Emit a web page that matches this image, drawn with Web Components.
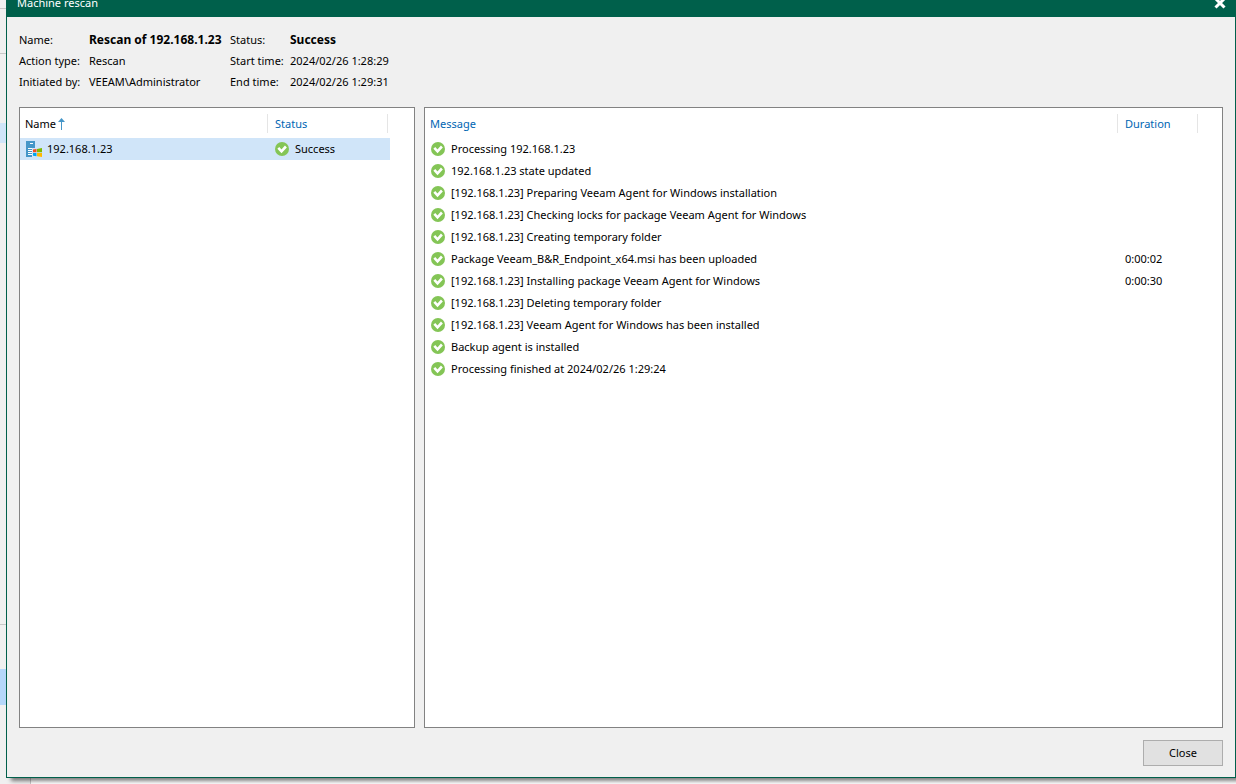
<!DOCTYPE html>
<html lang="en">
<head>
<meta charset="utf-8">
<meta name="viewport" content="width=device-width, initial-scale=1">
<title>Machine rescan</title>
<style>
    html, body {
        height: 100%;
        margin: 0;
        overflow: hidden;
    }
    body {
        display: grid;
        font: 11px/20px "Noto Sans", "Open Sans", sans-serif;
        color: #000;
    }
    body > * {
        grid-area: 1 / 1;
    }
</style>
</head>
<body>
<app-backdrop></app-backdrop>

<session-dialog>
    <span slot="title">Machine rescan</span>
    <session-info slot="info"></session-info>
    <machine-list slot="list"></machine-list>
    <message-list slot="list"></message-list>
</session-dialog>

<script>
/* main window left behind the dialog */
class AppBackdrop extends HTMLElement
{
    constructor()
    {
        super();
        this.attachShadow({ mode: 'open' });
        this.shadowRoot.innerHTML = `
            <style>
                :host {
                    display: grid;
                    grid-template-columns: 31px 1fr;
                    background: #fff;
                }
                .nav {
                    display: grid;
                    grid-template-rows: 9px 45px 69px 20px 1fr 44px 36px 79px;
                    background: #f0f0f0;
                    border-right: 1px solid #c8c8c8;
                }
                .line { border-bottom: 1px solid #c8c8c8; }
                .hover { background: #d0e5f9; }
                .selected { background: #b5d7fa; }
            </style>
            <div class="nav">
                <div class="line"></div>
                <div class="line"></div>
                <div></div>
                <div class="hover"></div>
                <div class="line"></div>
                <div></div>
                <div class="selected"></div>
                <div></div>
            </div>
        `;
    }
}

class SessionDialog extends HTMLElement
{
    constructor()
    {
        super();
        this.attachShadow({ mode: 'open' });
        this.shadowRoot.addEventListener('click', this.#onClick.bind(this));
        this.#render();
    }

    #onClick(e)
    {
        if (e.target.closest('.command-close')) this.remove();
    }

    #render()
    {
        this.shadowRoot.innerHTML = `
            <style>
                :host {
                    display: flex;
                    flex-direction: column;
                    box-sizing: border-box;
                    margin: -12px 0 6px 6px;
                    background: #f0f0f0;
                    border: 1px solid #00604b;
                    box-shadow: 5px 3px 4px rgba(0, 0, 0, 0.5);
                }
                header {
                    display: flex;
                    justify-content: space-between;
                    align-items: center;
                    height: 28px;
                    padding: 0 8px 0 10px;
                    background: #00604b;
                    color: #fff;
                }
                header button {
                    display: flex;
                    padding: 0;
                    border: 0;
                    background: none;
                }
                main {
                    flex: 1;
                    display: flex;
                    flex-direction: column;
                    gap: 15px;
                    padding: 12px;
                }
                .lists {
                    flex: 1;
                    display: grid;
                    grid-template-columns: 396px minmax(0, 1fr);
                    gap: 9px;
                }
                footer {
                    display: flex;
                    justify-content: flex-end;
                    padding: 0 12px 11px;
                }
                footer button {
                    width: 80px;
                    height: 26px;
                    padding: 0;
                    font: inherit;
                    color: inherit;
                    background: #e1e1e1;
                    border: 1px solid #adadad;
                }
                footer button:hover {
                    background: #e5f1fb;
                    border-color: #0078d7;
                }
            </style>
            <header>
                <slot name="title"></slot>
                <button type="button" class="command-close" aria-label="Close window">
                    <svg width="14" height="14" viewBox="0 0 14 14"><path d="M2.500 2.500l9 9M11.500 2.500l-9 9" stroke="#fff" stroke-width="3"/></svg>
                </button>
            </header>
            <main>
                <slot name="info"></slot>
                <div class="lists"><slot name="list"></slot></div>
            </main>
            <footer><button type="button" class="command-close">Close</button></footer>
        `;
    }
}

class SessionInfo extends HTMLElement
{
    constructor()
    {
        super();
        this.attachShadow({ mode: 'open' });
        this.shadowRoot.innerHTML = `
            <style>
                :host { display: block; }
                dl {
                    display: grid;
                    grid-template-columns: 70px 141px 60px 1fr;
                    line-height: 21px;
                    margin: 0;
                    white-space: nowrap;
                }
                dd { margin: 0; }
                .strong {
                    font-size: 12px;
                    font-weight: bold;
                }
            </style>
            <dl>
                <dt>Name:</dt><dd class="strong">Rescan of 192.168.1.23</dd>
                <dt>Status:</dt><dd class="strong">Success</dd>
                <dt>Action type:</dt><dd>Rescan</dd>
                <dt>Start time:</dt><dd>2024/02/26 1:28:29</dd>
                <dt>Initiated by:</dt><dd>VEEAM\\Administrator</dd>
                <dt>End time:</dt><dd>2024/02/26 1:29:31</dd>
            </dl>
        `;
    }
}

class IconSuccess extends HTMLElement
{
    constructor()
    {
        super();
        this.attachShadow({ mode: 'open' });
        this.shadowRoot.innerHTML = `
            <style>
                :host { display: block; flex: none; width: 14px; height: 14px; }
                svg { display: block; }
            </style>
            <svg width="14" height="14" viewBox="0 0 14 14">
                <circle cx="7" cy="7" r="7" fill="#84c556"/>
                <path d="M3.300 5.900l3.200 3.400 4.400-4.800" fill="none" stroke="#fff" stroke-width="2.600"/>
            </svg>
        `;
    }
}

class IconServer extends HTMLElement
{
    constructor()
    {
        super();
        this.attachShadow({ mode: 'open' });
        this.shadowRoot.innerHTML = `
            <style>
                :host { display: block; flex: none; width: 16px; height: 16px; }
                svg { display: block; }
            </style>
            <svg width="16" height="16" viewBox="0 0 16 16">
                <path d="M0 0h9v7H6v9H0z" fill="#4596c8"/>
                <path d="M4 2h3v1H4zM2 7h4v1H2zM2 9h4v1H2zM2 11h4v1H2zM2 13h4v1H2z" fill="#fff"/>
                <path d="M7 8.500l3.500-.5v3.200H7z" fill="#f04e23"/>
                <path d="M11 8l5-1v4.200h-5z" fill="#7fba00"/>
                <path d="M7 12h3.500v3.200L7 14.700z" fill="#00a4ef"/>
                <path d="M11 12h5v4l-5-.8z" fill="#ffb900"/>
            </svg>
        `;
    }
}

/* common look of both lists */
class BaseList extends HTMLElement
{
    constructor()
    {
        super();
        this.attachShadow({ mode: 'open' });
        this.shadowRoot.innerHTML = `
            <style>
                :host {
                    display: block;
                    background: #fff;
                    border: 1px solid #828282;
                    overflow: hidden;
                }
                table {
                    table-layout: fixed;
                    border-collapse: collapse;
                    white-space: nowrap;
                }
                th, td {
                    padding: 0 0 0 6px;
                    text-align: left;
                    font-weight: normal;
                }
                th {
                    height: 30px;
                    padding: 1px 0 0 5px;
                    box-sizing: border-box;
                    color: #0066b3;
                    background: linear-gradient(#e5e5e5, #e5e5e5) right 6px / 1px 19px no-repeat;
                }
                th.plain { background: none; }
                th.sorted { color: #000; }
                th svg { margin-left: 2px; vertical-align: -2px; }
                th + th, td + td { padding-left: 7px; }
                td { height: 22px; }
                .selected { background: #d0e5f9; }
                .cell {
                    display: flex;
                    align-items: center;
                    gap: 6px;
                }
            </style>
            ${this.getTemplate()}
        `;
    }

    getTemplate()
    {
        return '';
    }
}

class MachineList extends BaseList
{
    getTemplate()
    {
        return `
            <style>
                table { width: 370px; }
                .name { width: 248px; }
                .status { width: 120px; }
                td:first-child .cell { gap: 5px; }
            </style>
            <table>
                <colgroup><col class="name"><col class="status"><col></colgroup>
                <thead>
                    <tr>
                        <th class="sorted" aria-sort="ascending">Name<svg width="7" height="12" viewBox="0 0 7 12"><path d="M3.500 12V2" stroke="#4596c8"/><path d="M0 4L3.500 0 7 4z" fill="#4596c8"/></svg></th>
                        <th>Status</th>
                        <th class="plain"></th>
                    </tr>
                </thead>
                <tbody>
                    <tr class="selected">
                        <td><div class="cell"><icon-server></icon-server>192.168.1.23</div></td>
                        <td><div class="cell"><icon-success></icon-success>Success</div></td>
                        <td></td>
                    </tr>
                </tbody>
            </table>
        `;
    }
}

class MessageList extends BaseList
{
    getTemplate()
    {
        const messages = [
            ['Processing 192.168.1.23', ''],
            ['192.168.1.23 state updated', ''],
            ['[192.168.1.23] Preparing Veeam Agent for Windows installation', ''],
            ['[192.168.1.23] Checking locks for package Veeam Agent for Windows', ''],
            ['[192.168.1.23] Creating temporary folder', ''],
            ['Package Veeam_B&amp;R_Endpoint_x64.msi has been uploaded', '0:00:02'],
            ['[192.168.1.23] Installing package Veeam Agent for Windows', '0:00:30'],
            ['[192.168.1.23] Deleting temporary folder', ''],
            ['[192.168.1.23] Veeam Agent for Windows has been installed', ''],
            ['Backup agent is installed', ''],
            ['Processing finished at 2024/02/26 1:29:24', ''],
        ];
        const rows = messages.map(([text, duration]) => `
            <tr>
                <td><div class="cell"><icon-success></icon-success>${text}</div></td>
                <td>${duration}</td>
                <td></td>
            </tr>
        `).join('');

        return `
            <style>
                table { width: 100%; }
                .duration { width: 80px; }
                .rest { width: 24px; }
            </style>
            <table>
                <colgroup><col><col class="duration"><col class="rest"></colgroup>
                <thead>
                    <tr><th>Message</th><th>Duration</th><th class="plain"></th></tr>
                </thead>
                <tbody>${rows}</tbody>
            </table>
        `;
    }
}

customElements.define('app-backdrop', AppBackdrop);
customElements.define('icon-success', IconSuccess);
customElements.define('icon-server', IconServer);
customElements.define('session-info', SessionInfo);
customElements.define('machine-list', MachineList);
customElements.define('message-list', MessageList);
customElements.define('session-dialog', SessionDialog);
</script>
</body>
</html>
